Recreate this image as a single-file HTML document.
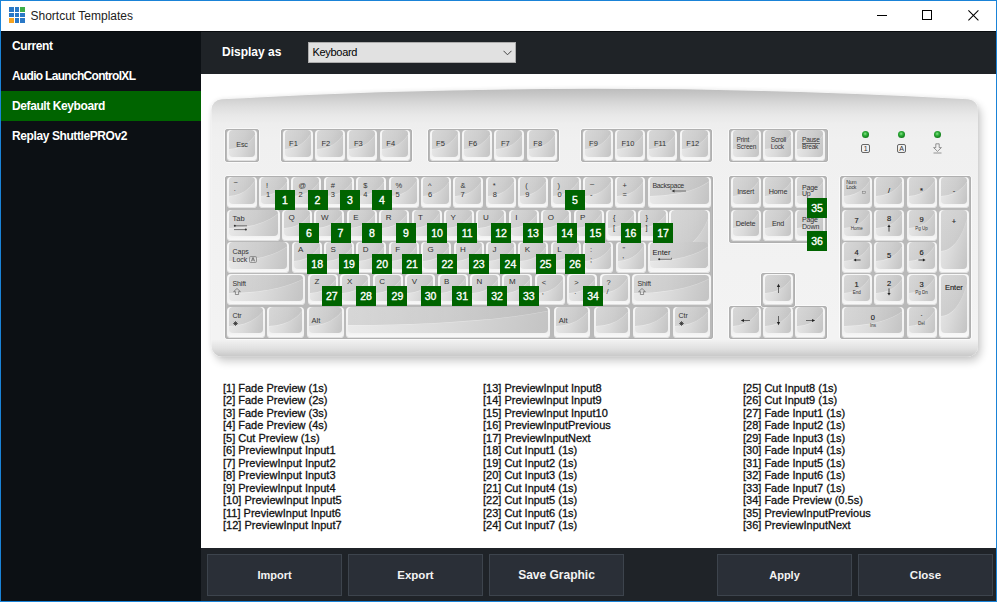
<!DOCTYPE html><html><head><meta charset="utf-8"><title>Shortcut Templates</title><style>
html,body{margin:0;padding:0;}
body{width:997px;height:602px;overflow:hidden;background:#fff;font-family:"Liberation Sans",sans-serif;position:relative;}
#win{position:absolute;left:0;top:0;width:995px;height:600px;border:1px solid #1a83d7;background:#fff;overflow:hidden;}
#title{position:absolute;left:0;top:0;width:995px;height:30px;background:#fff;}
#title .ic i{position:absolute;width:5px;height:5px;background:#2a78c6;}
#title .ic i.g{background:#3dae48;}
#title .ic i.o{background:#f6a21e;}
#title .ic{position:absolute;left:-1px;top:-1px;}
.tt{position:absolute;left:29.5px;top:8px;font-size:12px;color:#222;line-height:14px;}
.wmin{position:absolute;left:876px;top:14px;width:10px;height:1px;background:#000;}
.wmax{position:absolute;left:921px;top:9px;width:8px;height:8px;border:1px solid #000;}
.wcl{position:absolute;left:966.5px;top:9px;}
#side{position:absolute;left:0;top:30px;width:200px;height:570px;background:#0c1014;border-top:1px solid #05080b;box-sizing:border-box;}
#side .it{height:30px;line-height:30px;padding-left:11px;color:#fff;font-weight:bold;font-size:12px;letter-spacing:-0.4px;}
#side .it:first-child{height:29px;line-height:29px;}
#side .sel{background:#006400;}
#hdr{position:absolute;left:200px;top:30px;width:795px;height:43px;background:#1f2327;border-top:1px solid #090c0f;box-sizing:border-box;}
.da{position:absolute;left:21px;top:13px;color:#fff;font-weight:bold;font-size:12px;line-height:14px;}
.dd{position:absolute;left:107px;top:10px;width:206px;height:19px;background:#e1e1e1;border:1px solid #adadad;}
.dd span{position:absolute;left:3.5px;top:3px;font-size:11px;line-height:13px;color:#000;letter-spacing:-0.3px;}
.chev{position:absolute;left:194px;top:7px;}
#content{position:absolute;left:200px;top:73px;width:795px;height:474px;background:#fff;overflow:hidden;}
#body{position:absolute;left:-201px;top:-74px;}
.fr{position:absolute;background:#b9b9b9;border-radius:3px;box-shadow:0 0 0 0.8px #fdfdfd, inset 0 0 0 1px #b0b0b0;}
.k{position:absolute;border-radius:4px;background:linear-gradient(#f7f7f7,#f0f0f0 80%,#fafafa);box-shadow:inset 0 -1px 0 #e0e0e0;}
.k .t,.entt .t{position:absolute;left:2px;right:2px;top:0.3px;bottom:4.4px;border-radius:4px;overflow:hidden;background:linear-gradient(105deg,#ebebeb 0%,#dadada 50%,#c3c3c3 100%);}
.k .t:before,.entt .t:before{content:"";position:absolute;left:-118.6%;top:-171%;width:237%;height:242%;border-radius:50%;background:linear-gradient(to right,rgba(0,0,0,0.085) 50%,rgba(0,0,0,0.035) 92%);box-shadow:0 0.6px 0 rgba(255,255,255,0.3);}
.k .l{position:absolute;left:0;top:0;right:0;bottom:0;font-size:8px;line-height:9px;color:#333;}
.k.c .l{text-align:center;top:9.8px;font-size:7.2px;letter-spacing:-0.2px;}
.k.fl .l{left:6.5px;top:9px;font-size:7.5px;}
.k.tw .l{left:6px;top:7.2px;font-size:6.6px;line-height:6.9px;letter-spacing:-0.2px;}
.k.tw u{text-decoration:none;border-bottom:0.6px solid #666;}
.k.sym .l{left:7px;top:3.6px;font-size:7.5px;line-height:9.4px;}
.k.let .l{left:6.5px;top:3px;font-size:8px;}
.k.bksp .l{left:4.5px;top:3.5px;font-size:7px;letter-spacing:-0.3px;}
.k.tabk .l{left:6px;top:4px;font-size:7.5px;}
.k.caps .l{left:5.5px;top:6.3px;font-size:7px;line-height:7.6px;}
.k.shift .l{left:5.5px;top:5.8px;font-size:7px;letter-spacing:-0.15px;line-height:8px;}
.k.ctrl .l{left:5.5px;top:5.7px;font-size:7px;line-height:8px;letter-spacing:-0.1px;}
.k.alt .l{left:5px;top:9px;font-size:7.5px;}
.k.pg .l{left:6.5px;top:7.6px;font-size:7px;line-height:6.8px;letter-spacing:-0.15px;}
.k.num .l{left:4.5px;top:3.2px;font-size:5.2px;line-height:4.6px;letter-spacing:-0.25px;}
.k.np .l{text-align:center;top:10px;font-size:8px;}
.k.npd .l{text-align:center;top:6px;font-size:8.5px;line-height:9px;}
.k.npd small{display:block;font-size:4.5px;line-height:6px;}
.k.plus .l{text-align:center;top:10px;font-size:8px;}
.k.space .t{bottom:5px;}
.bd{position:absolute;width:20px;height:20px;background:#006400;color:#fff;font-weight:normal;-webkit-text-stroke:0.35px #fff;font-size:10.5px;line-height:21px;text-align:center;}
.led{position:absolute;width:7px;height:7px;border-radius:50%;background:radial-gradient(circle at 45% 40%,#8be58b 0%,#34b23e 30%,#168a20 60%,#0a4f0e 100%);}
.li1{position:absolute;width:7.4px;height:7.4px;border:0.7px solid #666;border-radius:2px;font-size:7px;line-height:7.6px;text-align:center;color:#333;}
.li3{position:absolute;}
.lst{position:absolute;top:308px;font-size:11px;line-height:12.45px;color:#111;-webkit-text-stroke:0.3px #111;}
#bot{position:absolute;left:200px;top:547px;width:795px;height:53px;background:#1f2328;}
.btn{position:absolute;top:6px;width:133px;height:40px;border:1px solid #3d444d;background:#2a2f37;color:#f3f3f3;font-weight:bold;font-size:11px;line-height:40px;text-align:center;}
i.bs,i.tab,i.sh{display:block;}
.ish{display:block;margin-top:0px;}
.itab{display:block;margin-top:1px;}
.ibs{display:block;margin-left:19px;margin-top:-0.5px;}
.ict{display:block;margin-top:0.5px;}
.k.arr .l{left:0;right:0;top:0;bottom:0;}
.iarr{position:absolute;left:9.5px;top:8.3px;}
.ent1,.ent2{position:absolute;}
.entt{position:absolute;border-radius:4px;overflow:hidden;}
.entt .t{left:0;right:0;top:0;bottom:0;}
.entl{position:absolute;font-size:7.5px;line-height:9px;color:#222;}
.entl .ibs{margin-left:4px;width:14px;}
.k.npc .dg{position:absolute;left:0;right:0;text-align:center;font-weight:normal;font-size:7.5px;line-height:8px;color:#222;-webkit-text-stroke:0.15px #222;}
.k.npc .sb{position:absolute;left:0;right:0;text-align:center;font-size:4.5px;line-height:5px;color:#333;}
.k.npc .na{position:absolute;left:11px;top:14px;}
.nli{position:absolute;left:15.7px;top:11px;}
.ien{display:block;margin-left:4px;margin-top:0px;}
.ica{position:absolute;left:16.5px;top:8.3px;}

</style></head><body>
<div id="win">
<div id="title"><div class="ic"><i style="left:9px;top:7px;width:5px;height:5px"></i><i style="left:15px;top:7px;width:4px;height:5px"></i><i class="g" style="left:20px;top:7px;width:5px;height:5px"></i><i style="left:9px;top:13px;width:5px;height:4px"></i><i style="left:15px;top:13px;width:4px;height:4px"></i><i style="left:20px;top:13px;width:5px;height:4px"></i><i class="o" style="left:9px;top:18px;width:5px;height:5px"></i><i style="left:15px;top:18px;width:4px;height:5px"></i><i style="left:20px;top:18px;width:5px;height:5px"></i></div><span class="tt">Shortcut Templates</span>
<div class="wmin"></div><div class="wmax"></div><svg class="wcl" width="11" height="11" viewBox="0 0 11 11"><path d="M0.4 0.4L10.4 10.4M10.4 0.4L0.4 10.4" stroke="#000" stroke-width="1.05"/></svg></div>
<div id="side"><div class="it">Current</div><div class="it" style="letter-spacing:-0.7px">Audio LaunchControlXL</div><div class="it sel">Default Keyboard</div><div class="it">Replay ShuttlePROv2</div></div>
<div id="hdr"><span class="da">Display as</span><div class="dd"><span>Keyboard</span><svg width="9" height="6" viewBox="0 0 9 6" class="chev"><path d="M0.5 0.8L4.5 4.8L8.5 0.8" stroke="#444" stroke-width="1" fill="none"/></svg></div></div>
<div id="content">
<svg id="body" width="997" height="602" viewBox="0 0 997 602">
<defs>
<linearGradient id="bg" gradientUnits="userSpaceOnUse" x1="0" y1="86" x2="0" y2="357">
<stop offset="0" stop-color="#b8b8b8"/>
<stop offset="0.011" stop-color="#bdbdbd"/>
<stop offset="0.033" stop-color="#c8c8c8"/>
<stop offset="0.059" stop-color="#d6d6d6"/>
<stop offset="0.0775" stop-color="#dedede"/>
<stop offset="0.107" stop-color="#e8e8e8"/>
<stop offset="0.14" stop-color="#eeeeee"/>
<stop offset="0.2" stop-color="#f0f0f0"/>
<stop offset="0.9" stop-color="#f3f3f3"/>
<stop offset="0.935" stop-color="#f3f3f3"/>
<stop offset="0.97" stop-color="#e0e0e0"/>
<stop offset="1" stop-color="#c6c6c6"/>
</linearGradient>
<filter id="sh" x="-5%" y="-10%" width="110%" height="125%"><feGaussianBlur in="SourceAlpha" stdDeviation="4.5" result="b1"/><feOffset in="b1" dx="3" dy="5" result="o1"/><feComponentTransfer in="o1" result="s1"><feFuncA type="linear" slope="0.2"/></feComponentTransfer><feGaussianBlur in="SourceAlpha" stdDeviation="2.5" result="b2"/><feComponentTransfer in="b2" result="s2"><feFuncA type="linear" slope="0.07"/></feComponentTransfer><feMerge><feMergeNode in="s2"/><feMergeNode in="s1"/><feMergeNode in="SourceGraphic"/></feMerge></filter>
</defs>
<path filter="url(#sh)" fill="url(#bg)" d="M211.5 110 A10.5 10.5 0 0 1 221.5 99.3 Q595 78.4 968 99.3 A10.5 10.5 0 0 1 978 110 L978 346 A10.5 10.5 0 0 1 967.5 356.5 L222 356.5 A10.5 10.5 0 0 1 211.5 346 Z"/>
</svg>
<div class="fr" style="left:24px;top:54.7px;width:33.5px;height:33.2px"></div>
<div class="fr" style="left:80px;top:54.7px;width:131px;height:33.2px"></div>
<div class="fr" style="left:227px;top:54.7px;width:131px;height:33.2px"></div>
<div class="fr" style="left:380px;top:54.7px;width:131px;height:33.2px"></div>
<div class="fr" style="left:528px;top:54.7px;width:98.5px;height:33.2px"></div>
<div class="fr" style="left:24px;top:102px;width:487.5px;height:163px"></div>
<div class="fr" style="left:527.5px;top:102px;width:98.5px;height:66.5px"></div>
<div class="fr" style="left:527.5px;top:231.6px;width:98.5px;height:33.5px"></div>
<div class="fr" style="left:560px;top:198.8px;width:34px;height:34.5px"></div>
<div class="fr" style="left:639px;top:102px;width:130.5px;height:163px"></div>
<div class="k c" style="left:26px;top:56px;width:30px;height:31px"><div class="t"></div><div class="l">Esc</div></div>
<div class="k fl" style="left:81.6px;top:56px;width:30px;height:31px"><div class="t"></div><div class="l">F1</div></div>
<div class="k fl" style="left:114px;top:56px;width:30px;height:31px"><div class="t"></div><div class="l">F2</div></div>
<div class="k fl" style="left:146.4px;top:56px;width:30px;height:31px"><div class="t"></div><div class="l">F3</div></div>
<div class="k fl" style="left:178.8px;top:56px;width:30px;height:31px"><div class="t"></div><div class="l">F4</div></div>
<div class="k fl" style="left:228.6px;top:56px;width:30px;height:31px"><div class="t"></div><div class="l">F5</div></div>
<div class="k fl" style="left:261px;top:56px;width:30px;height:31px"><div class="t"></div><div class="l">F6</div></div>
<div class="k fl" style="left:293.4px;top:56px;width:30px;height:31px"><div class="t"></div><div class="l">F7</div></div>
<div class="k fl" style="left:325.8px;top:56px;width:30px;height:31px"><div class="t"></div><div class="l">F8</div></div>
<div class="k fl" style="left:381.6px;top:56px;width:30px;height:31px"><div class="t"></div><div class="l">F9</div></div>
<div class="k fl" style="left:414px;top:56px;width:30px;height:31px"><div class="t"></div><div class="l">F10</div></div>
<div class="k fl" style="left:446.4px;top:56px;width:30px;height:31px"><div class="t"></div><div class="l">F11</div></div>
<div class="k fl" style="left:478.8px;top:56px;width:30px;height:31px"><div class="t"></div><div class="l">F12</div></div>
<div class="k tw" style="left:529.6px;top:56px;width:30px;height:31px"><div class="t"></div><div class="l">Print<br>Screen</div></div>
<div class="k tw" style="left:562px;top:56px;width:30px;height:31px"><div class="t"></div><div class="l"><span style="margin-left:1.8px;display:block">Scroll<br>Lock</span></div></div>
<div class="k tw" style="left:594.4px;top:56px;width:30px;height:31px"><div class="t"></div><div class="l"><span style="margin-left:0.6px;display:block"><u>Pause</u><br>Break</span></div></div>
<div class="k sym" style="left:25.6px;top:103px;width:30px;height:31px"><div class="t"></div><div class="l"><span style="position:relative;top:-2.5px">~</span><br><span style="position:relative;top:-4.5px">·</span></div></div>
<div class="k sym" style="left:58px;top:103px;width:30px;height:31px"><div class="t"></div><div class="l">!<br>1</div></div>
<div class="k sym" style="left:90.4px;top:103px;width:30px;height:31px"><div class="t"></div><div class="l">@<br>2</div></div>
<div class="k sym" style="left:122.8px;top:103px;width:30px;height:31px"><div class="t"></div><div class="l">#<br>3</div></div>
<div class="k sym" style="left:155.2px;top:103px;width:30px;height:31px"><div class="t"></div><div class="l">$<br>4</div></div>
<div class="k sym" style="left:187.6px;top:103px;width:30px;height:31px"><div class="t"></div><div class="l">%<br>5</div></div>
<div class="k sym" style="left:220px;top:103px;width:30px;height:31px"><div class="t"></div><div class="l">^<br>6</div></div>
<div class="k sym" style="left:252.4px;top:103px;width:30px;height:31px"><div class="t"></div><div class="l">&amp;<br>7</div></div>
<div class="k sym" style="left:284.8px;top:103px;width:30px;height:31px"><div class="t"></div><div class="l">*<br>8</div></div>
<div class="k sym" style="left:317.2px;top:103px;width:30px;height:31px"><div class="t"></div><div class="l">(<br>9</div></div>
<div class="k sym" style="left:349.6px;top:103px;width:30px;height:31px"><div class="t"></div><div class="l">)<br>0</div></div>
<div class="k sym" style="left:382px;top:103px;width:30px;height:31px"><div class="t"></div><div class="l"><span style="position:relative;top:-1.5px">–</span><br>-</div></div>
<div class="k sym" style="left:414.4px;top:103px;width:30px;height:31px"><div class="t"></div><div class="l">+<br>=</div></div>
<div class="k bksp" style="left:446.9px;top:103px;width:63px;height:31px"><div class="t"></div><div class="l">Backspace<svg class="ibs" width="16" height="4" viewBox="0 0 16 4"><path d="M3 2H15" stroke="#555" stroke-width="0.8"/><path d="M0.5 2L3.5 0.5V3.5Z" fill="#333"/></svg></div></div>
<div class="k tabk" style="left:25.6px;top:135.5px;width:53px;height:31px"><div class="t"></div><div class="l">Tab<svg class="itab" width="15" height="8" viewBox="0 0 15 8"><path d="M1.5 1.8H14M1 5.6H13.5" stroke="#555" stroke-width="0.8"/><circle cx="1.8" cy="1.8" r="1" fill="#333"/><circle cx="12.8" cy="5.6" r="1" fill="#333"/></svg></div></div>
<div class="k let" style="left:81px;top:135.5px;width:30px;height:31px"><div class="t"></div><div class="l">Q</div></div>
<div class="k let" style="left:113.4px;top:135.5px;width:30px;height:31px"><div class="t"></div><div class="l">W</div></div>
<div class="k let" style="left:145.8px;top:135.5px;width:30px;height:31px"><div class="t"></div><div class="l">E</div></div>
<div class="k let" style="left:178.2px;top:135.5px;width:30px;height:31px"><div class="t"></div><div class="l">R</div></div>
<div class="k let" style="left:210.6px;top:135.5px;width:30px;height:31px"><div class="t"></div><div class="l">T</div></div>
<div class="k let" style="left:243px;top:135.5px;width:30px;height:31px"><div class="t"></div><div class="l">Y</div></div>
<div class="k let" style="left:275.4px;top:135.5px;width:30px;height:31px"><div class="t"></div><div class="l">U</div></div>
<div class="k let" style="left:307.8px;top:135.5px;width:30px;height:31px"><div class="t"></div><div class="l">I</div></div>
<div class="k let" style="left:340.2px;top:135.5px;width:30px;height:31px"><div class="t"></div><div class="l">O</div></div>
<div class="k let" style="left:372.6px;top:135.5px;width:30px;height:31px"><div class="t"></div><div class="l">P</div></div>
<div class="k sym" style="left:405px;top:135.5px;width:30px;height:31px"><div class="t"></div><div class="l">{<br>[</div></div>
<div class="k sym" style="left:437.4px;top:135.5px;width:30px;height:31px"><div class="t"></div><div class="l">}<br>]</div></div>
<div class="k caps" style="left:26px;top:167.9px;width:62px;height:31px"><div class="t"></div><div class="l">Caps<br>Lock<svg class="ica" width="8" height="7" viewBox="0 0 8 7"><rect x="0.5" y="0.5" width="7" height="6" rx="1.2" fill="none" stroke="#666" stroke-width="0.6"/><path d="M2.3 5.4L4 1.4L5.7 5.4M2.9 4H5.1" stroke="#444" stroke-width="0.6" fill="none"/></svg></div></div>
<div class="k let" style="left:90.5px;top:167.9px;width:30px;height:31px"><div class="t"></div><div class="l">A</div></div>
<div class="k let" style="left:122.9px;top:167.9px;width:30px;height:31px"><div class="t"></div><div class="l">S</div></div>
<div class="k let" style="left:155.3px;top:167.9px;width:30px;height:31px"><div class="t"></div><div class="l">D</div></div>
<div class="k let" style="left:187.7px;top:167.9px;width:30px;height:31px"><div class="t"></div><div class="l">F</div></div>
<div class="k let" style="left:220.1px;top:167.9px;width:30px;height:31px"><div class="t"></div><div class="l">G</div></div>
<div class="k let" style="left:252.5px;top:167.9px;width:30px;height:31px"><div class="t"></div><div class="l">H</div></div>
<div class="k let" style="left:284.9px;top:167.9px;width:30px;height:31px"><div class="t"></div><div class="l">J</div></div>
<div class="k let" style="left:317.3px;top:167.9px;width:30px;height:31px"><div class="t"></div><div class="l">K</div></div>
<div class="k let" style="left:349.7px;top:167.9px;width:30px;height:31px"><div class="t"></div><div class="l">L</div></div>
<div class="k sym" style="left:382.1px;top:167.9px;width:30px;height:31px"><div class="t"></div><div class="l">:<br>;</div></div>
<div class="k sym" style="left:414.5px;top:167.9px;width:30px;height:31px"><div class="t"></div><div class="l">"<br>'</div></div>
<div class="k shift" style="left:26px;top:200.3px;width:78.4px;height:31px"><div class="t"></div><div class="l">Shift<svg class="ish" width="8" height="7" viewBox="0 0 8 7"><path d="M4 0.5L7.4 3.6H5.6V6.5H2.4V3.6H0.6Z" fill="none" stroke="#555" stroke-width="0.6"/></svg></div></div>
<div class="k let" style="left:107px;top:200.3px;width:30px;height:31px"><div class="t"></div><div class="l">Z</div></div>
<div class="k let" style="left:139.4px;top:200.3px;width:30px;height:31px"><div class="t"></div><div class="l">X</div></div>
<div class="k let" style="left:171.8px;top:200.3px;width:30px;height:31px"><div class="t"></div><div class="l">C</div></div>
<div class="k let" style="left:204.2px;top:200.3px;width:30px;height:31px"><div class="t"></div><div class="l">V</div></div>
<div class="k let" style="left:236.6px;top:200.3px;width:30px;height:31px"><div class="t"></div><div class="l">B</div></div>
<div class="k let" style="left:269px;top:200.3px;width:30px;height:31px"><div class="t"></div><div class="l">N</div></div>
<div class="k let" style="left:301.4px;top:200.3px;width:30px;height:31px"><div class="t"></div><div class="l">M</div></div>
<div class="k sym" style="left:333.8px;top:200.3px;width:30px;height:31px"><div class="t"></div><div class="l">&lt;<br>,</div></div>
<div class="k sym" style="left:366.2px;top:200.3px;width:30px;height:31px"><div class="t"></div><div class="l">&gt;<br>.</div></div>
<div class="k sym" style="left:398.6px;top:200.3px;width:30px;height:31px"><div class="t"></div><div class="l">?<br>/</div></div>
<div class="k shift" style="left:431px;top:200.3px;width:79px;height:31px"><div class="t"></div><div class="l">Shift<svg class="ish" width="8" height="7" viewBox="0 0 8 7"><path d="M4 0.5L7.4 3.6H5.6V6.5H2.4V3.6H0.6Z" fill="none" stroke="#555" stroke-width="0.6"/></svg></div></div>
<div class="k ctrl" style="left:26px;top:232.7px;width:37.5px;height:31px"><div class="t"></div><div class="l">Ctr<br><svg class="ict" width="5" height="5" viewBox="0 0 5 5"><path d="M2.5 0.2V4.8M0.2 2.5H4.8M0.9 0.9L4.1 4.1M4.1 0.9L0.9 4.1" stroke="#333" stroke-width="0.8"/></svg></div></div>
<div class="k " style="left:65.7px;top:232.7px;width:37.3px;height:31px"><div class="t"></div><div class="l"></div></div>
<div class="k alt" style="left:105.6px;top:232.7px;width:37.5px;height:31px"><div class="t"></div><div class="l">Alt</div></div>
<div class="k space" style="left:145.4px;top:232.7px;width:203.6px;height:31px"><div class="t"></div><div class="l"></div></div>
<div class="k alt" style="left:352.8px;top:232.7px;width:36.5px;height:31px"><div class="t"></div><div class="l">Alt</div></div>
<div class="k " style="left:392.7px;top:232.7px;width:36px;height:31px"><div class="t"></div><div class="l"></div></div>
<div class="k " style="left:432.3px;top:232.7px;width:37px;height:31px"><div class="t"></div><div class="l"></div></div>
<div class="k ctrl" style="left:472.1px;top:232.7px;width:37px;height:31px"><div class="t"></div><div class="l">Ctr<br><svg class="ict" width="5" height="5" viewBox="0 0 5 5"><path d="M2.5 0.2V4.8M0.2 2.5H4.8M0.9 0.9L4.1 4.1M4.1 0.9L0.9 4.1" stroke="#333" stroke-width="0.8"/></svg></div></div>
<div class="k c" style="left:529.6px;top:103px;width:30px;height:31px"><div class="t"></div><div class="l">Insert</div></div>
<div class="k c" style="left:562px;top:103px;width:30px;height:31px"><div class="t"></div><div class="l">Home</div></div>
<div class="k pg" style="left:594.4px;top:103px;width:30px;height:31px"><div class="t"></div><div class="l">Page<br>Up</div></div>
<div class="k c" style="left:529.6px;top:135.5px;width:30px;height:31px"><div class="t"></div><div class="l">Delete</div></div>
<div class="k c" style="left:562px;top:135.5px;width:30px;height:31px"><div class="t"></div><div class="l">End</div></div>
<div class="k pg" style="left:594.4px;top:135.5px;width:30px;height:31px"><div class="t"></div><div class="l">Page<br>Down</div></div>
<div class="k arr" style="left:562px;top:200.3px;width:30px;height:31px"><div class="t"></div><div class="l"><svg class="iarr" width="11" height="11" viewBox="0 0 11 11" style="transform:rotate(0deg)"><path d="M5.5 3.5V10" stroke="#333" stroke-width="0.7"/><path d="M5.5 0.8L7.1 4H3.9Z" fill="#222"/></svg></div></div>
<div class="k arr" style="left:529.6px;top:232.7px;width:30px;height:31px"><div class="t"></div><div class="l"><svg class="iarr" width="11" height="11" viewBox="0 0 11 11" style="transform:rotate(270deg)"><path d="M5.5 3.5V10" stroke="#333" stroke-width="0.7"/><path d="M5.5 0.8L7.1 4H3.9Z" fill="#222"/></svg></div></div>
<div class="k arr" style="left:562px;top:232.7px;width:30px;height:31px"><div class="t"></div><div class="l"><svg class="iarr" width="11" height="11" viewBox="0 0 11 11" style="transform:rotate(180deg)"><path d="M5.5 3.5V10" stroke="#333" stroke-width="0.7"/><path d="M5.5 0.8L7.1 4H3.9Z" fill="#222"/></svg></div></div>
<div class="k arr" style="left:594.4px;top:232.7px;width:30px;height:31px"><div class="t"></div><div class="l"><svg class="iarr" width="11" height="11" viewBox="0 0 11 11" style="transform:rotate(90deg)"><path d="M5.5 3.5V10" stroke="#333" stroke-width="0.7"/><path d="M5.5 0.8L7.1 4H3.9Z" fill="#222"/></svg></div></div>
<div class="k num" style="left:640.7px;top:103px;width:30px;height:31px"><div class="t"></div><div class="l">Num<br>Lock<svg class="nli" width="4" height="3" viewBox="0 0 4 3"><rect x="0.3" y="0.3" width="3.4" height="2.4" fill="none" stroke="#777" stroke-width="0.5"/></svg></div></div>
<div class="k npc" style="left:673.1px;top:103px;width:30px;height:31px"><div class="t"></div><div class="l"><b class="dg" style="top:10.3px">/</b></div></div>
<div class="k npc" style="left:705.5px;top:103px;width:30px;height:31px"><div class="t"></div><div class="l"><b class="dg" style="top:10.3px">*</b></div></div>
<div class="k npc" style="left:737.9px;top:103px;width:30px;height:31px"><div class="t"></div><div class="l"><b class="dg" style="top:10.3px">-</b></div></div>
<div class="k npc" style="left:640.7px;top:135.5px;width:30px;height:31px"><div class="t"></div><div class="l"><b class="dg" style="top:7px">7</b><small class="sb" style="top:16px">Home</small></div></div>
<div class="k npc" style="left:673.1px;top:135.5px;width:30px;height:31px"><div class="t"></div><div class="l"><b class="dg" style="top:5.4px">8</b><svg class="na" width="8" height="8" viewBox="0 0 8 8" style="transform:rotate(0deg)"><path d="M4 2.6V7.6" stroke="#222" stroke-width="0.8"/><path d="M4 0.4L5.6 3.1H2.4Z" fill="#222"/></svg></div></div>
<div class="k npc" style="left:705.5px;top:135.5px;width:30px;height:31px"><div class="t"></div><div class="l"><b class="dg" style="top:6.6px">9</b><small class="sb" style="top:16px">Pg Up</small></div></div>
<div class="k npc" style="left:737.9px;top:135.5px;width:30px;height:63.4px"><div class="t"></div><div class="l"><b class="dg" style="top:8.6px">+</b></div></div>
<div class="k npc" style="left:640.7px;top:167.9px;width:30px;height:31px"><div class="t"></div><div class="l"><b class="dg" style="top:7.3px">4</b><svg class="na" width="8" height="8" viewBox="0 0 8 8" style="transform:rotate(270deg)"><path d="M4 2.6V7.6" stroke="#222" stroke-width="0.8"/><path d="M4 0.4L5.6 3.1H2.4Z" fill="#222"/></svg></div></div>
<div class="k npc" style="left:673.1px;top:167.9px;width:30px;height:31px"><div class="t"></div><div class="l"><b class="dg" style="top:10.3px">5</b></div></div>
<div class="k npc" style="left:705.5px;top:167.9px;width:30px;height:31px"><div class="t"></div><div class="l"><b class="dg" style="top:7.3px">6</b><svg class="na" width="8" height="8" viewBox="0 0 8 8" style="transform:rotate(90deg)"><path d="M4 2.6V7.6" stroke="#222" stroke-width="0.8"/><path d="M4 0.4L5.6 3.1H2.4Z" fill="#222"/></svg></div></div>
<div class="k npc" style="left:640.7px;top:200.3px;width:30px;height:31px"><div class="t"></div><div class="l"><b class="dg" style="top:6.8px">1</b><small class="sb" style="top:16px">End</small></div></div>
<div class="k npc" style="left:673.1px;top:200.3px;width:30px;height:31px"><div class="t"></div><div class="l"><b class="dg" style="top:5.3px">2</b><svg class="na" width="8" height="8" viewBox="0 0 8 8" style="transform:rotate(180deg)"><path d="M4 2.6V7.6" stroke="#222" stroke-width="0.8"/><path d="M4 0.4L5.6 3.1H2.4Z" fill="#222"/></svg></div></div>
<div class="k npc" style="left:705.5px;top:200.3px;width:30px;height:31px"><div class="t"></div><div class="l"><b class="dg" style="top:6.8px">3</b><small class="sb" style="top:16px">Pg Dn</small></div></div>
<div class="k npc" style="left:737.9px;top:200.3px;width:30px;height:63.4px"><div class="t"></div><div class="l"><b class="dg" style="top:9.3px">Enter</b></div></div>
<div class="k npc" style="left:640.7px;top:232.7px;width:62.4px;height:31px"><div class="t"></div><div class="l"><b class="dg" style="top:7.2px">0</b><small class="sb" style="top:16px">Ins</small></div></div>
<div class="k npc" style="left:705.5px;top:232.7px;width:30px;height:31px"><div class="t"></div><div class="l"><b class="dg" style="top:3.8px">.</b><small class="sb" style="top:14px">Del</small></div></div>
<div class="k ent1" style="left:468px;top:135.5px;width:41px;height:63.5px"></div>
<div class="k ent2" style="left:447px;top:167.9px;width:62px;height:31.1px"></div>
<div class="entt" style="left:470px;top:135.8px;width:37px;height:58.6px"><div class="t"></div></div>
<div class="entt e2" style="left:449px;top:167.9px;width:58px;height:26.5px"><div class="t"></div></div>
<div class="entl" style="left:451.5px;top:174px">Enter<svg class="ien" width="15" height="4" viewBox="0 0 15 4"><path d="M2.5 2.3H14.5V0.8" stroke="#555" stroke-width="0.7" fill="none"/><circle cx="2.2" cy="2.3" r="1" fill="#333"/></svg></div>
<div class="led" style="left:660.7px;top:56.6px"></div>
<div class="led" style="left:696.8px;top:56.6px"></div>
<div class="led" style="left:732.9px;top:56.6px"></div>
<div class="li1" style="left:660px;top:70px">1</div>
<div class="li1" style="left:696px;top:70px">A</div>
<svg class="li3" style="left:731px;top:69px" width="11" height="11" viewBox="0 0 11 11"><path d="M3.8 0.8H7.2V4.6H9.4L5.5 8.4L1.6 4.6H3.8Z M1.5 10H9.5" fill="none" stroke="#555" stroke-width="0.6"/></svg>
<div class="bd" style="left:74px;top:116px">1</div>
<div class="bd" style="left:106.5px;top:116px">2</div>
<div class="bd" style="left:139px;top:116px">3</div>
<div class="bd" style="left:171px;top:116px">4</div>
<div class="bd" style="left:364px;top:116px">5</div>
<div class="bd" style="left:98px;top:149px">6</div>
<div class="bd" style="left:129.5px;top:149px">7</div>
<div class="bd" style="left:161px;top:149px">8</div>
<div class="bd" style="left:195px;top:149px">9</div>
<div class="bd" style="left:226px;top:149px">10</div>
<div class="bd" style="left:256.2px;top:149px">11</div>
<div class="bd" style="left:290px;top:149px">12</div>
<div class="bd" style="left:322px;top:149px">13</div>
<div class="bd" style="left:356px;top:149px">14</div>
<div class="bd" style="left:384.4px;top:149px">15</div>
<div class="bd" style="left:419.5px;top:149px">16</div>
<div class="bd" style="left:452px;top:149px">17</div>
<div class="bd" style="left:106.2px;top:180.2px">18</div>
<div class="bd" style="left:138.1px;top:180.2px">19</div>
<div class="bd" style="left:171.2px;top:180.2px">20</div>
<div class="bd" style="left:201px;top:180.2px">21</div>
<div class="bd" style="left:236.3px;top:180.2px">22</div>
<div class="bd" style="left:267.8px;top:180.2px">23</div>
<div class="bd" style="left:299.4px;top:180.2px">24</div>
<div class="bd" style="left:334.6px;top:180.2px">25</div>
<div class="bd" style="left:364px;top:180.2px">26</div>
<div class="bd" style="left:120.8px;top:212.2px">27</div>
<div class="bd" style="left:155.1px;top:212.2px">28</div>
<div class="bd" style="left:186.4px;top:212.2px">29</div>
<div class="bd" style="left:219.5px;top:212.2px">30</div>
<div class="bd" style="left:251.2px;top:212.2px">31</div>
<div class="bd" style="left:286px;top:212.2px">32</div>
<div class="bd" style="left:317.8px;top:212.2px">33</div>
<div class="bd" style="left:382.1px;top:212.2px">34</div>
<div class="bd" style="left:606px;top:124px">35</div>
<div class="bd" style="left:606px;top:157px">36</div>
<div class="lst" style="left:22px">
<div>[1] Fade Preview (1s)</div>
<div>[2] Fade Preview (2s)</div>
<div>[3] Fade Preview (3s)</div>
<div>[4] Fade Preview (4s)</div>
<div>[5] Cut Preview (1s)</div>
<div>[6] PreviewInput Input1</div>
<div>[7] PreviewInput Input2</div>
<div>[8] PreviewInput Input3</div>
<div>[9] PreviewInput Input4</div>
<div>[10] PreviewInput Input5</div>
<div>[11] PreviewInput Input6</div>
<div>[12] PreviewInput Input7</div>
</div>
<div class="lst" style="left:282px">
<div>[13] PreviewInput Input8</div>
<div>[14] PreviewInput Input9</div>
<div>[15] PreviewInput Input10</div>
<div>[16] PreviewInputPrevious</div>
<div>[17] PreviewInputNext</div>
<div>[18] Cut Input1 (1s)</div>
<div>[19] Cut Input2 (1s)</div>
<div>[20] Cut Input3 (1s)</div>
<div>[21] Cut Input4 (1s)</div>
<div>[22] Cut Input5 (1s)</div>
<div>[23] Cut Input6 (1s)</div>
<div>[24] Cut Input7 (1s)</div>
</div>
<div class="lst" style="left:542px">
<div>[25] Cut Input8 (1s)</div>
<div>[26] Cut Input9 (1s)</div>
<div>[27] Fade Input1 (1s)</div>
<div>[28] Fade Input2 (1s)</div>
<div>[29] Fade Input3 (1s)</div>
<div>[30] Fade Input4 (1s)</div>
<div>[31] Fade Input5 (1s)</div>
<div>[32] Fade Input6 (1s)</div>
<div>[33] Fade Input7 (1s)</div>
<div>[34] Fade Preview (0.5s)</div>
<div>[35] PreviewInputPrevious</div>
<div>[36] PreviewInputNext</div>
</div>
</div>
<div id="bot">
<div class="btn" style="left:6px;font-size:11px">Import</div>
<div class="btn" style="left:147px;font-size:11.5px">Export</div>
<div class="btn" style="left:288px;font-size:12px">Save Graphic</div>
<div class="btn" style="left:516px;font-size:11px">Apply</div>
<div class="btn" style="left:657px;font-size:11.5px">Close</div>
</div>
</div></body></html>
